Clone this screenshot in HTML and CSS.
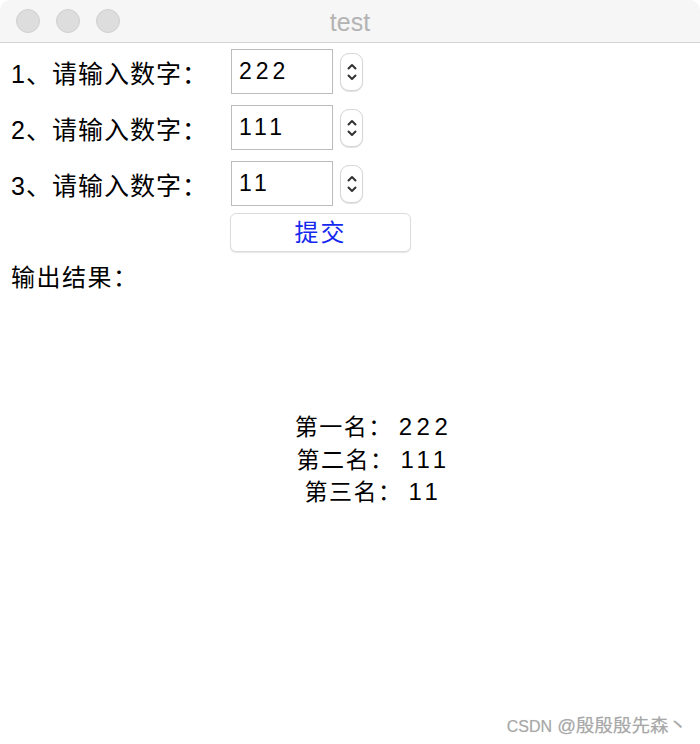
FILE: index.html
```html
<!DOCTYPE html>
<html lang="zh">
<head>
<meta charset="utf-8">
<title>test</title>
<link rel="stylesheet" href="styles.css">
</head>
<body>
<div class="window">
  <div class="titlebar">
    <div class="lights">
      <span class="light"></span>
      <span class="light"></span>
      <span class="light"></span>
    </div>
    <div class="title">test</div>
    <div></div>
  </div>
  <div class="content">
    <div class="row">
      <span class="label">1、请输入数字：</span>
      <div class="entry">222</div>
      <div class="stepper">
        <svg width="10" height="24" viewBox="0 0 10 24"><path d="M1.5 8.5 L5 5 L8.5 8.5 M1.5 15.5 L5 19 L8.5 15.5" fill="none" stroke="#333" stroke-width="2" stroke-linecap="round" stroke-linejoin="round"/></svg>
      </div>
    </div>
    <div class="row">
      <span class="label">2、请输入数字：</span>
      <div class="entry">111</div>
      <div class="stepper">
        <svg width="10" height="24" viewBox="0 0 10 24"><path d="M1.5 8.5 L5 5 L8.5 8.5 M1.5 15.5 L5 19 L8.5 15.5" fill="none" stroke="#333" stroke-width="2" stroke-linecap="round" stroke-linejoin="round"/></svg>
      </div>
    </div>
    <div class="row">
      <span class="label">3、请输入数字：</span>
      <div class="entry">11</div>
      <div class="stepper">
        <svg width="10" height="24" viewBox="0 0 10 24"><path d="M1.5 8.5 L5 5 L8.5 8.5 M1.5 15.5 L5 19 L8.5 15.5" fill="none" stroke="#333" stroke-width="2" stroke-linecap="round" stroke-linejoin="round"/></svg>
      </div>
    </div>
    <div class="button-row">
      <button class="submit">提交</button>
    </div>
    <div class="out-label">输出结果：</div>
    <div class="results">
      <div>第一名：<span class="num">222</span></div>
      <div>第二名：<span class="num">111</span></div>
      <div>第三名：<span class="num">11</span></div>
    </div>
  </div>
  <div class="watermark"><span class="wm-latin">CSDN</span> @殷殷殷先森丶</div>
</div>
</body>
</html>
```

FILE: styles.css
```css
html, body {
  margin: 0;
  padding: 0;
  background: #ffffff;
}

body {
  font-family: "Liberation Sans", "Noto Sans CJK SC", sans-serif;
  color: #000;
}

.window {
  width: 700px;
  height: 744px;
  display: flex;
  flex-direction: column;
  background: #fff;
}

.titlebar {
  height: 42px;
  border-bottom: 1px solid #d3d3d3;
  background: #f6f6f6;
  border-top-left-radius: 10px;
  border-top-right-radius: 10px;
  display: grid;
  grid-template-columns: 1fr auto 1fr;
  align-items: center;
}

.lights {
  display: flex;
  gap: 16px;
  padding-left: 16px;
}

.light {
  width: 22px;
  height: 22px;
  border-radius: 50%;
  background: #dddddd;
  border: 1px solid #d0d0d0;
}

.title {
  font-size: 25px;
  color: #b3b3b3;
  padding-top: 3px;
}

.content {
  padding: 6px 0 0 11px;
  display: flex;
  flex-direction: column;
}

.row {
  display: flex;
  align-items: center;
  height: 45px;
  margin-bottom: 11px;
}

.label {
  width: 220px;
  font-size: 25px;
  letter-spacing: 1px;
}

.entry {
  box-sizing: border-box;
  width: 102px;
  height: 45px;
  border: 1px solid #bcbcbc;
  font-size: 23px;
  letter-spacing: 4px;
  padding-left: 7px;
  display: flex;
  align-items: center;
}

.stepper {
  box-sizing: border-box;
  margin-left: 7px;
  width: 23px;
  height: 38px;
  border-radius: 9px;
  border: 1px solid #d6d6d6;
  box-shadow: 0 1px 1px rgba(0,0,0,0.12);
  display: flex;
  align-items: center;
  justify-content: center;
  background: #fff;
}

.button-row {
  display: flex;
  margin-top: -4px;
  padding-left: 219px;
}

.submit {
  box-sizing: border-box;
  width: 181px;
  height: 39px;
  background: #fff;
  border: 1px solid #dcdcdc;
  border-radius: 6px;
  box-shadow: 0 1px 1px rgba(0,0,0,0.10);
  font-family: "Liberation Sans", "Noto Sans CJK SC", sans-serif;
  font-size: 24px;
  letter-spacing: 2px;
  color: #1428f0;
  padding: 0;
  line-height: 37px;
}

.out-label {
  font-size: 24px;
  letter-spacing: 1.5px;
  margin-top: 10px;
  line-height: 32px;
}

.results {
  margin-top: 117px;
  margin-left: 36px;
  text-align: center;
  font-size: 23px;
  letter-spacing: 1.5px;
  line-height: 31.5px;
}

.num {
  font-size: 24px;
  letter-spacing: 4.5px;
  padding-left: 6px;
}

.watermark {
  margin-top: auto;
  text-align: right;
  padding-right: 13px;
  padding-bottom: 7px;
  font-size: 18.5px;
  color: #a8a8a8;
  text-shadow: 0 0 1px rgba(0,0,0,0.15);
}

.wm-latin {
  font-size: 16px;
}
```
